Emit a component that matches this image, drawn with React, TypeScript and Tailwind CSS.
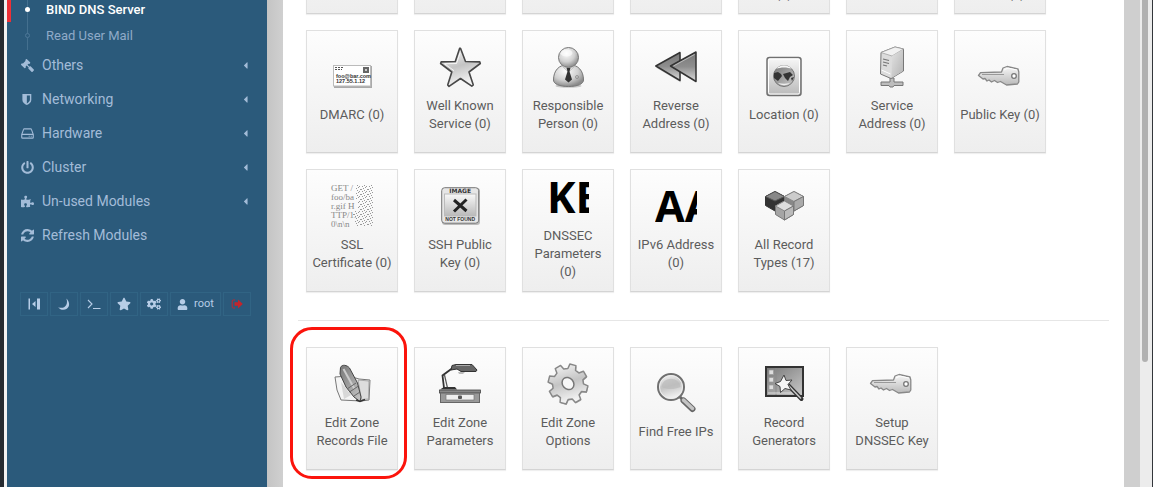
import React from "react";
import { FaCaretLeft, FaCogs, FaGavel, FaPowerOff, FaPuzzlePiece, FaStar, FaUser } from "react-icons/fa";

type IconProps = { className?: string };

function Svg({ children }: { children: React.ReactNode }) {
  return (
    <svg viewBox="0 0 48 48" className="size-12 shrink-0" aria-hidden="true">
      {children}
    </svg>
  );
}

/* Shared greyscale gradients used by the module drawings. */
function Gradients() {
  return (
    <svg className="absolute size-0" aria-hidden="true">
      <defs>
        <linearGradient id="light" x1="0" y1="0" x2="0" y2="1">
          <stop offset="0" stopColor="#f8f8f8" />
          <stop offset="1" stopColor="#b9b9b9" />
        </linearGradient>
        <linearGradient id="shine" x1="0" y1="0" x2="0.3" y2="1">
          <stop offset="0" stopColor="#fafafa" />
          <stop offset="0.55" stopColor="#c4c4c4" />
          <stop offset="1" stopColor="#f2f2f2" />
        </linearGradient>
        <linearGradient id="mid" x1="0" y1="0" x2="1" y2="1">
          <stop offset="0" stopColor="#777" />
          <stop offset="1" stopColor="#c9c9c9" />
        </linearGradient>
        <linearGradient id="pane" x1="0" y1="0" x2="1" y2="1">
          <stop offset="0" stopColor="#e2e2e2" />
          <stop offset="1" stopColor="#b4b4b4" />
        </linearGradient>
        <linearGradient id="arrow" x1="0" y1="0" x2="0" y2="1">
          <stop offset="0" stopColor="#777" />
          <stop offset="0.5" stopColor="#8e8e8e" />
          <stop offset="1" stopColor="#dcdcdc" />
        </linearGradient>
        <radialGradient id="ball" cx="0.4" cy="0.3" r="0.7">
          <stop offset="0" stopColor="#fdfdfd" />
          <stop offset="0.6" stopColor="#d0d0d0" />
          <stop offset="1" stopColor="#8b8b8b" />
        </radialGradient>
        <pattern id="noise" width="7" height="5" patternUnits="userSpaceOnUse">
          <path d="M0 1h1v1h-1zM2 0h1v1h-1zM4 2h2v1h-2zM1 3h1v1h-1zM3 4h1v1h-1zM6 4h1v1h-1z" fill="#999" />
        </pattern>
      </defs>
    </svg>
  );
}

const EnvelopeIcon = () => (
  <Svg>
    <rect x="6" y="14" width="38" height="22" fill="#aaa" />
    <rect x="5.500" y="13.500" width="37" height="20.500" fill="#fff" stroke="#bbb" />
    <path d="M7 15.500h9M7 17.500h7" stroke="#555" strokeDasharray="2 1" />
    <rect x="35" y="15" width="6" height="6" fill="#666" />
    <path d="M37 17h2v2h-2z" fill="#ccc" />
    <text x="8" y="25.500" fontFamily="Liberation Sans" fontWeight="700" fontSize="5.500" fill="#333">foo@bar.com</text>
    <text x="8" y="31" fontFamily="Liberation Sans" fontWeight="700" fontSize="5.500" fill="#333">127.55.1.12</text>
  </Svg>
);

const StarIcon = () => (
  <Svg>
    <path d="M24.500 5.200 L29.500 18.500 L43.800 18.900 L44.300 20.500 L33 29 L37.300 42 L35.800 43.200 L24.500 35.500 L13 43.400 L11.700 42 L15.800 29 L4.600 20.500 L5.200 18.900 L19.300 18.500 L23.600 5.400 Z" fill="url(#shine)" stroke="#484848" strokeWidth="1.600" strokeLinejoin="round" />
    <path d="M24 10l-3.500 10.500-12 .2 9.500 7" fill="none" stroke="#fff" opacity=".8" />
  </Svg>
);

const PersonIcon = () => (
  <Svg>
    <ellipse cx="24.500" cy="43" rx="13" ry="1.700" fill="#999" opacity=".5" />
    <path d="M9.500 37c0-9 5-15.500 15-15.500S39.500 28 39.500 37c0 4-6 6.500-15 6.500S9.500 41 9.500 37z" fill="url(#ball)" stroke="#777" />
    <path d="M17 22l7.500 7 7.500-7" fill="#eee" stroke="#aaa" strokeWidth=".7" />
    <path d="M22.500 25h4l-1 3.500 2.500 8-3.500 3-3.500-3 2.500-8z" fill="#333" />
    <circle cx="24.500" cy="14.500" r="10" fill="url(#ball)" stroke="#777" />
    <ellipse cx="22.500" cy="10" rx="6" ry="3.500" fill="#fff" opacity=".6" />
    <circle cx="33" cy="34" r="1.500" fill="none" stroke="#888" strokeWidth=".8" />
  </Svg>
);

const ReverseIcon = () => (
  <Svg>
    <path d="M4.500 25L29 11.500v28z" fill="#888" opacity=".3" />
    <path d="M3.800 23L28 9.500v28z" fill="url(#arrow)" stroke="#333" strokeWidth="1.500" strokeLinejoin="round" />
    <path d="M18.500 23L44 9v29.500z" fill="url(#arrow)" stroke="#333" strokeWidth="1.500" strokeLinejoin="round" />
    <path d="M21.500 23L42.500 11.500" stroke="#bbb" strokeWidth="1" />
  </Svg>
);

const LocationIcon = () => (
  <Svg>
    <rect x="7" y="5.500" width="34" height="38" rx="2.500" fill="url(#light)" stroke="#707070" strokeWidth="1.500" />
    <rect x="8.500" y="7" width="31" height="35" rx="1.500" fill="none" stroke="#fff" />
    <circle cx="24" cy="24" r="10.500" fill="url(#mid)" stroke="#777" />
    <path d="M14 21l4-1 3 2 1 2-4 5-4-3zM23 22l7-2 3 3-3 2-2 4-3-3zM31 26l3-1-2 4z" fill="#333" />
    <path d="M16 17c5-5 11-5 16 0-5-2-11-2-16 0z" fill="#f5f5f5" />
    <path d="M18 31c4 3 8 3 12 0-4 1-8 1-12 0z" fill="#eee" />
  </Svg>
);

const ServerIcon = () => (
  <Svg>
    <path d="M22 35h4v4h9v3.500h-9l-1 1.500h-3l-1-1.500h-8V39h9z" fill="#bdbdbd" stroke="#777" />
    <path d="M13 9.500L27 4l8.500 2v22L23 35.500 12.500 31z" fill="#dcdcdc" stroke="#777" />
    <path d="M13 9.500L27 4l8.500 2L24 13z" fill="#f1f1f1" stroke="#999" strokeWidth=".7" />
    <path d="M24 13l11-6.500v21.500L23.500 35z" fill="url(#pane)" />
    <path d="M15 16l6 1.500M15 19l6 1.500M15 22l4 1" stroke="#777" strokeWidth="1.200" />
    <path d="M13.500 27l9 4" stroke="#fff" />
  </Svg>
);

const KeyIcon = () => (
  <Svg>
    <path d="M27 16l4-1.500 11 2.500.8 3v10l-1.300 2-11 1-6-3.500-3 1-3-2-3 1.500-2.500-2-2 1-2-2.500-2 .5-4.500-3.500 2-2.800 21-.7z" fill="url(#light)" stroke="#888" strokeWidth="1.300" strokeLinejoin="round" />
    <path d="M6 22.500h22" stroke="#999" />
    <path d="M28 18l4-2 9 2" fill="none" stroke="#fff" />
    <circle cx="38" cy="24" r="2.300" fill="#fff" stroke="#777" strokeWidth="1.300" />
  </Svg>
);

const CertificateIcon = () => (
  <Svg>
    <g fontFamily="Liberation Serif" fontSize="9" fill="#888">
      <text x="3" y="9">GET /</text>
      <text x="3" y="18">foo/ba</text>
      <text x="3" y="27">r.gif H</text>
      <text x="3" y="36">TTP/1.</text>
      <text x="3" y="45">0\n\n</text>
    </g>
    <path d="M28 3h17v41H27v-7h-2v-8h5V18h-2z" fill="url(#noise)" />
  </Svg>
);

const MissingImageIcon = () => (
  <Svg>
    <rect x="6" y="6" width="38" height="37" rx="3" fill="#bbb" />
    <rect x="5.700" y="5.700" width="37" height="35.500" rx="3" fill="#e6e6e6" stroke="#777" />
    <rect x="8.500" y="12" width="31.500" height="22" fill="url(#light)" stroke="#bbb" />
    <path d="M18 18l12.500 11M30.500 17.500L18 29.500" stroke="#222" strokeWidth="3" />
    <text x="24.200" y="11" textAnchor="middle" fontFamily="DejaVu Sans" fontWeight="700" fontSize="6" fill="#333">IMAGE</text>
    <text x="24.200" y="39" textAnchor="middle" fontFamily="Liberation Sans" fontWeight="700" fontSize="5" fill="#333">NOT FOUND</text>
  </Svg>
);

function LetterIcon({ text }: { text: string }) {
  return (
    <span className="flex size-12 shrink-0 items-center px-[3px]">
      <span className="w-full overflow-hidden text-left font-['Open_Sans'] text-[43px] leading-12 font-bold whitespace-nowrap text-black">
        {text}
      </span>
    </span>
  );
}

const BlocksIcon = () => (
  <Svg>
    <g strokeWidth="1" strokeLinejoin="round">
      <path d="M5.500 14.500L15 9.500l9.500 5v9L15 29l-9.500-5.500z" fill="#333" stroke="#333" />
      <path d="M5.500 14.500L15 9.500l9.500 5L15 19z" fill="#888" stroke="#555" />
      <path d="M24.500 14.500l9.500-5 9.500 5v9L34 29l-9.500-5.500z" fill="#888" stroke="#777" />
      <path d="M24.500 14.500l9.500-5 9.500 5-9.500 5z" fill="#ccc" stroke="#888" />
      <path d="M34 19.500l9.500-5v9L34 29z" fill="#aaa" stroke="#777" />
      <path d="M15.500 24l9-5 9 5v8.500l-9 5.500-9-5.500z" fill="#a5a5a5" stroke="#777" />
      <path d="M15.500 24l9-5 9 5-9 5z" fill="#ddd" stroke="#888" />
      <path d="M24.500 29l9-5v8.500l-9 5.500z" fill="#bbb" stroke="#777" />
    </g>
  </Svg>
);

const PenIcon = () => (
  <Svg>
    <path d="M7 17l14-1 10 3 11 1-1 20-8 1-20-1-4-10z" fill="#f5f5f5" stroke="#777" strokeLinejoin="round" />
    <path d="M30 20l11 1-.5 18-7 .5z" fill="#ddd" stroke="#999" strokeWidth=".8" />
    <path d="M13 22l10 13-7 4z" fill="#bbb" opacity=".5" />
    <path d="M12.500 7.500C14 4 19 5 21.500 8l8 15 3.500 14-1 4.500-6-4.500-8-10-6-13z" fill="url(#mid)" stroke="#444" />
    <path d="M15.500 9l11 20" stroke="#ccc" strokeWidth="2" />
    <path d="M19 29l9-6M21.500 32l9-6M26 36l6-4" stroke="#666" />
    <path d="M28 40l4 1.500 5-2" fill="none" stroke="#333" strokeWidth="1.500" />
  </Svg>
);

const LampIcon = () => (
  <Svg>
    <path d="M8 28L6.500 15.500 18 7" fill="none" stroke="#333" strokeWidth="1.800" />
    <path d="M8.500 15l3 13" stroke="#555" strokeWidth="1.200" />
    <path d="M16 5.500l4-1h16l5 5.500-1 1.500H25L21 9l-6 1z" fill="#666" stroke="#333" />
    <path d="M20 5.500h14" stroke="#aaa" />
    <path d="M22 12h7l-2 2h-4z" fill="#bbb" />
    <path d="M4 29.500l4-2.500h11l2 2.500z" fill="#333" />
    <rect x="3.500" y="30" width="41" height="3" fill="#888" stroke="#444" strokeWidth=".8" />
    <rect x="4.500" y="33" width="39" height="9.500" fill="#999" stroke="#666" />
    <rect x="10" y="34.500" width="28" height="5.500" fill="#eee" stroke="#777" strokeWidth=".7" />
    <rect x="22" y="35.500" width="4" height="3.500" rx="1" fill="#555" />
  </Svg>
);

function gearPoints(cx: number, cy: number, outer: number, inner: number, teeth: number) {
  const step = (Math.PI * 2) / teeth;
  const shape: [number, number][] = [
    [-0.33, inner],
    [-0.2, outer],
    [0.2, outer],
    [0.33, inner],
  ];
  return Array.from({ length: teeth }, (_, i) =>
    shape
      .map(([offset, r]) => {
        const a = (i + offset) * step + 0.25;
        return `${(cx + Math.cos(a) * r).toFixed(2)},${(cy + Math.sin(a) * r).toFixed(2)}`;
      })
      .join(" "),
  ).join(" ");
}

const GearIcon = () => (
  <Svg>
    <polygon points={gearPoints(24.5, 25, 20, 15.5, 8)} fill="#aaa" />
    <polygon points={gearPoints(24, 24, 20, 15.5, 8)} fill="url(#shine)" stroke="#888" strokeWidth="1.500" strokeLinejoin="round" />
    <ellipse cx="24" cy="23.500" rx="5.500" ry="6.500" fill="#f7f7f7" stroke="#777" strokeWidth="1.500" transform="rotate(-40 24 23.500)" />
  </Svg>
);

const MagnifierIcon = () => (
  <Svg>
    <path d="M27 27l4 4" stroke="#666" strokeWidth="3" />
    <path d="M31.500 31.500l9 8.500" stroke="#666" strokeWidth="6" strokeLinecap="round" />
    <path d="M31.500 31l9 8.500" stroke="#c4c4c4" strokeWidth="3.500" strokeLinecap="round" />
    <circle cx="19" cy="18" r="13" fill="url(#shine)" stroke="#707070" strokeWidth="2" />
    <circle cx="19" cy="18" r="11.500" fill="none" stroke="#eee" />
    <path d="M9.500 18c1-11 18-11 19 0-6 2.500-13 3-19 0z" fill="#bbb" opacity=".7" />
  </Svg>
);

const GeneratorIcon = () => (
  <Svg>
    <rect x="6" y="7" width="37" height="29" fill="url(#mid)" stroke="#333" strokeWidth="2" />
    <path d="M16 8v27" stroke="#8a8a8a" />
    <g fill="#ddd" stroke="#999" strokeWidth=".7">
      <rect x="9" y="10" width="4.500" height="4.500" />
      <rect x="9" y="17.500" width="4.500" height="4.500" />
      <rect x="9" y="25" width="4.500" height="4.500" />
    </g>
    <path d="M8 33h28" stroke="#ddd" />
    <path d="M28 25l13.500 14" stroke="#333" strokeWidth="4" strokeLinecap="round" />
    <path d="M28 25l13 13.500" stroke="#ccc" strokeWidth="1.500" />
    <path d="M24 15l2 5.500 6-.5-4 4.500 3 5.500-6-1.500-4.500 4-.5-6-5-3 5.500-2z" fill="#f5f5f5" stroke="#444" />
  </Svg>
);

const MoonIcon = ({ className }: IconProps) => (
  <svg viewBox="0 0 14 14" className={className} fill="currentColor" aria-hidden="true">
    <path d="M9.300 1.500C13 5 13 9.500 9.800 11.800 7 13.700 3 13 1.200 10.300c3.500 1.200 6.500.4 7.900-2 1.200-2.100 1.200-4.500.2-6.800z" />
  </svg>
);

const PromptIcon = ({ className }: IconProps) => (
  <svg viewBox="0 0 14 14" className={className} fill="none" stroke="currentColor" strokeWidth="1.100" aria-hidden="true">
    <path d="M1 3l4 4-4 4M6 11.500h7.500" />
  </svg>
);

const CollapseIcon = ({ className }: IconProps) => (
  <svg viewBox="0 0 14 14" className={className} fill="currentColor" aria-hidden="true">
    <path d="M1.500 1.500H3v11H1.500zM10 1.500H13v11H10zM8.500 4v6L5 7z" />
  </svg>
);

const LogoutIcon = ({ className }: IconProps) => (
  <svg viewBox="0 0 14 14" className={className} fill="currentColor" aria-hidden="true">
    <path d="M5 3H3.300C2.600 3 2.200 3.400 2.200 4v6c0 .6.400 1 1.100 1H5" fill="none" stroke="currentColor" />
    <path d="M4.500 5.200h3.500V2.500L12.800 7 8 11.500V8.800H4.500z" />
  </svg>
);

const GavelIcon = ({ className }: IconProps) => <FaGavel className={`${className} -scale-x-100`} />;

const ShieldIcon = ({ className }: IconProps) => (
  <svg viewBox="0 0 14 14" className={className} fill="currentColor" fillRule="evenodd" aria-hidden="true">
    <path d="M1.500 1.200h9.600v6.300c0 2.600-2.400 4.300-4.800 5.500C3.900 11.800 1.500 10.100 1.500 7.500zM6.300 2.700v8.500c1.700-1 3.300-2.200 3.300-3.900V2.700z" />
  </svg>
);

const DriveIcon = ({ className }: IconProps) => (
  <svg viewBox="0 0 14 14" className={className} fill="none" stroke="currentColor" strokeWidth="1.200" strokeLinejoin="round" aria-hidden="true">
    <path d="M.8 8l2-5.400c.1-.4.4-.6.800-.6h6.800c.4 0 .7.200.8.600l2 5.400v3.200c0 .5-.3.800-.8.800H1.600c-.5 0-.8-.3-.8-.8zM.8 8h12.400M8.300 10h1M10.500 10h1" />
  </svg>
);

const RefreshIcon = ({ className }: IconProps) => (
  <svg viewBox="0 0 1536 1536" className={className} fill="currentColor" aria-hidden="true">
    <path d="M1511 928q0 5-1 7-64 268-268 434.500t-478 166.500q-146 0-282.500-55t-243.500-157l-129 129q-19 19-45 19t-45-19-19-45v-448q0-26 19-45t45-19h448q26 0 45 19t19 45-19 45l-137 137q71 66 161 102t187 36q134 0 250-65t186-179q11-17 53-117 8-23 30-23h192q13 0 22.500 9.500t9.500 22.500zm25-800v448q0 26-19 45t-45 19h-448q-26 0-45-19t-19-45 19-45l138-138q-148-137-349-137-134 0-250 65t-186 179q-11 17-53 117-8 23-30 23h-199q-13 0-22.500-9.500t-9.500-22.500v-7q65-268 270-434.500t480-166.500q146 0 284 55.500t245 156.500l130-129q19-19 45-19t45 19 19 45z" />
  </svg>
);

type Module = { label: string; icon?: React.ReactNode; highlighted?: boolean };

const recordTypes: Module[] = [
  { label: "Address (0)" },
  { label: "Name Server (0)" },
  { label: "Name Alias (0)" },
  { label: "Mail Server (0)" },
  { label: "Host Information (0)" },
  { label: "Text (0)" },
  { label: "Sender Permitted From (0)" },
  { label: "DMARC (0)", icon: <EnvelopeIcon /> },
  { label: "Well Known Service (0)", icon: <StarIcon /> },
  { label: "Responsible Person (0)", icon: <PersonIcon /> },
  { label: "Reverse Address (0)", icon: <ReverseIcon /> },
  { label: "Location (0)", icon: <LocationIcon /> },
  { label: "Service Address (0)", icon: <ServerIcon /> },
  { label: "Public Key (0)", icon: <KeyIcon /> },
  { label: "SSL Certificate (0)", icon: <CertificateIcon /> },
  { label: "SSH Public Key (0)", icon: <MissingImageIcon /> },
  { label: "DNSSEC Parameters (0)", icon: <LetterIcon text="KEY" /> },
  { label: "IPv6 Address (0)", icon: <LetterIcon text="AAAA" /> },
  { label: "All Record Types (17)", icon: <BlocksIcon /> },
];

const zoneActions: Module[] = [
  { label: "Edit Zone Records File", icon: <PenIcon />, highlighted: true },
  { label: "Edit Zone Parameters", icon: <LampIcon /> },
  { label: "Edit Zone Options", icon: <GearIcon /> },
  { label: "Find Free IPs", icon: <MagnifierIcon /> },
  { label: "Record Generators", icon: <GeneratorIcon /> },
  { label: "Setup DNSSEC Key", icon: <KeyIcon /> },
];

function ModuleCard({ label, icon, highlighted }: Module) {
  return (
    <a
      href="#"
      className="relative flex h-[123px] w-[92px] flex-col items-center justify-center gap-[6px] border border-[#e0e0e0] border-b-[#d4d4d4] bg-linear-to-b from-[#fdfdfd] to-[#eeeeee] px-1 pb-2 text-center text-[13px] leading-[18px] text-[#5c5c5c] shadow-[0_1px_1px_#00000010]"
    >
      {icon ?? <span className="size-12 shrink-0" />}
      <span>{label}</span>
      {highlighted && (
        <span className="pointer-events-none absolute -top-[21px] -right-[10px] -bottom-[10px] -left-[17px] rounded-[22px] border-[3px] border-[#fb140c]" />
      )}
    </a>
  );
}

const menu = [
  { label: "Others", icon: GavelIcon, open: true },
  { label: "Networking", icon: ShieldIcon, open: true },
  { label: "Hardware", icon: DriveIcon, open: true },
  { label: "Cluster", icon: FaPowerOff, open: true },
  { label: "Un-used Modules", icon: FaPuzzlePiece, open: true },
  { label: "Refresh Modules", icon: RefreshIcon, open: false },
];

const tools = [
  { label: "Collapse menu", icon: CollapseIcon },
  { label: "Night mode", icon: MoonIcon },
  { label: "Terminal", icon: PromptIcon },
  { label: "Favorites", icon: FaStar },
  { label: "Theme configuration", icon: FaCogs },
];

const toolButton = "flex h-6 items-center justify-center border border-[#316484] text-[#b7cde7]";

function Sidebar() {
  return (
    <aside className="w-[260px] shrink-0 bg-[#2b5a7b] text-[#a3bcd8]">
      <nav>
        <div className="relative -mt-[3px] -mb-px text-[13px]">
          <span className="absolute top-0 left-5 h-[53px] w-px bg-[#44708f]" />
          <a href="#" className="relative flex h-[25px] items-center border-l-4 border-[#ee3036] pl-[14px] font-medium text-white">
            <span className="size-[5px] rounded-full bg-white" />
            <span className="ml-4">BIND DNS Server</span>
          </a>
          <a href="#" className="relative flex h-[27px] items-center pl-[18px] text-[#8faac8]">
            <span className="size-[5px] rounded-full border border-[#4d7898] bg-[#2b5a7b]" />
            <span className="ml-4">Read User Mail</span>
          </a>
        </div>
        {menu.map(({ label, icon: Icon, open }) => (
          <a key={label} href="#" className="flex h-[34px] items-center pr-4 pl-[14px] text-sm">
            <Icon className="size-[13px]" />
            <span className="ml-2">{label}</span>
            {open && <FaCaretLeft className="ml-auto size-[11px]" />}
          </a>
        ))}
      </nav>
      <div className="mt-10 ml-[13px] flex gap-[2px]">
        {tools.map(({ label, icon: Icon }) => (
          <button key={label} type="button" aria-label={label} className={`${toolButton} w-7`}>
            <Icon className="size-[14px]" />
          </button>
        ))}
        <button type="button" className={`${toolButton} w-[51px] gap-[6px] text-[11px]`}>
          <FaUser className="size-[11px]" />
          root
        </button>
        <button type="button" aria-label="Log out" className={`${toolButton} w-7`}>
          <LogoutIcon className="size-[14px] text-[#c3252c]" />
        </button>
      </div>
    </aside>
  );
}

export default function App() {
  return (
    <div className="flex h-screen overflow-hidden border-r border-[#33363b] bg-[#cfcfcf] font-[Roboto,sans-serif]">
      <Gradients />
      <div className="w-[7px] shrink-0 border-r-[3px] border-[#f1f1f1] bg-[#252a30]" />
      <Sidebar />
      <div className="w-4 shrink-0 bg-linear-to-r from-[#c4c4c4] to-[#d0d0d0]" />
      <main className="min-w-0 flex-1 overflow-hidden bg-white px-[15px]">
        <section className="-mt-[109px] flex flex-wrap gap-4 px-2">
          {recordTypes.map((item) => (
            <ModuleCard key={item.label} {...item} />
          ))}
        </section>
        <hr className="mt-[28px] mb-[26px] border-[#e6e6e6]" />
        <section className="flex flex-wrap gap-4 px-2">
          {zoneActions.map((item) => (
            <ModuleCard key={item.label} {...item} />
          ))}
        </section>
      </main>
      <div className="w-4 shrink-0" />
      <div className="w-3 shrink-0 bg-[#ececec] px-[2px]">
        <div className="h-[362px] w-[6px] rounded-b-[3px] bg-[#b1b1b1]" />
      </div>
    </div>
  );
}
